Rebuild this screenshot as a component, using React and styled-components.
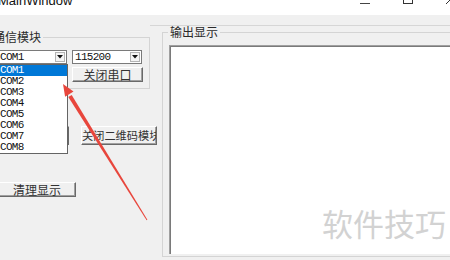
import React from 'react'
import styled, { createGlobalStyle } from 'styled-components'

const GlobalStyle = createGlobalStyle`
  html, body {
    margin: 0;
    padding: 0;
    background: #f0f0f0;
    overflow: hidden;
  }
`

const Screen = styled.div`
  position: relative;
  width: 450px;
  height: 260px;
  overflow: hidden;
  background: #f0f0f0;
  font-family: "Noto Sans CJK SC", "Liberation Sans", sans-serif;
  font-size: 12px;
  color: #1e1e1e;
`

const TitleBar = styled.header`
  height: 15px;
  background: #fff;
  display: flex;
  align-items: flex-start;
  overflow: hidden;
`

const Title = styled.span`
  font-family: "Liberation Sans", sans-serif;
  font-size: 13px;
  line-height: 13px;
  margin: -6px 0 0 -2px;
  color: #111;
`

const Controls = styled.div`
  margin-left: auto;
  margin-top: -6px;
  margin-right: -6px;
  display: flex;
  gap: 33px;
  svg { display: block; }
`

const Body = styled.div`
  display: flex;
  align-items: flex-start;
`

const LeftPane = styled.div`
  margin-left: -14px;
  width: 164px;
  flex-shrink: 0;
  display: flex;
  flex-direction: column;
  align-items: flex-start;
`

const GroupBox = styled.fieldset`
  box-sizing: border-box;
  margin: ${p => p.$top || 0}px ${p => p.$right || 0}px 0 0;
  padding: 0;
  width: ${p => (p.$w ? p.$w + 'px' : 'auto')};
  border: 1px solid #d4d4d4;
  min-width: 0;
`

const Legend = styled.legend`
  margin-left: ${p => p.$offset}px;
  padding: 0 2px;
  font-size: 12px;
  line-height: 12px;
  color: #2a2a2a;
`

const GroupContent = styled.div`
  padding: ${p => p.$pad};
`

const ComboRow = styled.div`
  display: flex;
  gap: 5px;
`

const Combo = styled.div`
  position: relative;
  box-sizing: border-box;
  width: 70px;
  height: 14px;
  border: 1px solid #7a7a7a;
  background: #fff;
  display: flex;
  align-items: center;
`

const ComboValue = styled.span`
  padding-left: 2px;
  font-family: "Liberation Mono", monospace;
  font-size: 11px;
  letter-spacing: -0.7px;
  line-height: 12px;
  color: #111;
`

const ArrowBox = styled.span`
  margin-left: auto;
  margin-right: 1px;
  box-sizing: border-box;
  width: 10px;
  height: 10px;
  border: 1px solid #b4b4b4;
  background: #f4f4f4;
  display: flex;
  align-items: center;
  justify-content: center;
`

const ListBox = styled.ul`
  position: absolute;
  top: 13px;
  left: 0;
  z-index: 2;
  box-sizing: border-box;
  width: 70px;
  margin: 0;
  padding: 0;
  list-style: none;
  background: #fff;
  border: 1px solid #646464;
`

const ListItem = styled.li`
  height: 11px;
  line-height: 11px;
  padding-left: 1px;
  font-family: "Liberation Mono", monospace;
  font-size: 11px;
  letter-spacing: -0.7px;
  background: ${p => (p.$selected ? '#0078d7' : 'transparent')};
  color: ${p => (p.$selected ? '#fff' : '#111')};
`

const Button = styled.div`
  box-sizing: border-box;
  width: ${p => p.$w}px;
  height: ${p => p.$h}px;
  line-height: ${p => p.$h - 2}px;
  background: #f0f0f0;
  border-style: solid;
  border-width: 1px;
  border-color: #fff #696969 #696969 #fff;
  box-shadow: inset -1px -1px 0 #a0a0a0;
  font-size: ${p => p.$fs || 12}px;
  color: #333;
  text-align: center;
  white-space: nowrap;
  overflow: hidden;
`

const ButtonRow = styled.div`
  display: flex;
  gap: ${p => p.$gap || 0}px;
  margin: ${p => p.$m};
`

const RightPane = styled.div`
  flex: 1;
  min-width: 0;
  margin-top: 10px;
  padding-left: 12px;
  border-top: 1px solid #d6d6d6;
`

const OutputBox = styled.div`
  height: 208px;
  background: #fff;
  border-top: 1px solid #a0a0a0;
  border-left: 1px solid #a0a0a0;
  box-shadow: inset 1px 1px 0 #7a7a7a;
`

const Watermark = styled.div`
  position: absolute;
  left: 322px;
  top: 207px;
  font-family: "Noto Sans CJK SC", sans-serif;
  font-size: 31px;
  line-height: 31px;
  color: #d2d2d2;
  z-index: 2;
`

const ArrowLayer = styled.svg`
  position: absolute;
  left: 0;
  top: 0;
  z-index: 3;
  pointer-events: none;
`

const ports = ['COM1', 'COM2', 'COM3', 'COM4', 'COM5', 'COM6', 'COM7', 'COM8']

function DownArrow() {
  return (
    <svg width="6" height="4" viewBox="0 0 6 4">
      <path d="M0 0 H6 L3 3.5 Z" fill="#111" />
    </svg>
  )
}

export default function App() {
  return (
    <>
      <GlobalStyle />
      <Screen>
        <TitleBar>
          <Title>MainWindow</Title>
          <Controls>
            <svg width="10" height="10" viewBox="0 0 10 10">
              <line x1="0" y1="9.5" x2="10" y2="9.5" stroke="#444" />
            </svg>
            <svg width="10" height="10" viewBox="0 0 10 10">
              <rect x="0.5" y="0.5" width="9" height="9" fill="none" stroke="#333" />
            </svg>
            <svg width="10" height="10" viewBox="0 0 10 10">
              <path d="M0 0 L10 10 M10 0 L0 10" stroke="#333" />
            </svg>
          </Controls>
        </TitleBar>

        <Body>
          <LeftPane>
            <GroupBox $top={16} $w={164}>
              <Legend $offset={4}>通信模块</Legend>
              <GroupContent $pad="7px 0 6px 10px">
                <ComboRow>
                  <Combo>
                    <ComboValue>COM1</ComboValue>
                    <ArrowBox><DownArrow /></ArrowBox>
                    <ListBox>
                      {ports.map((p, i) => (
                        <ListItem key={p} $selected={i === 0}>{p}</ListItem>
                      ))}
                    </ListBox>
                  </Combo>
                  <Combo>
                    <ComboValue>115200</ComboValue>
                    <ArrowBox><DownArrow /></ArrowBox>
                  </Combo>
                </ComboRow>
                <ButtonRow $m="3px 0 0 75px">
                  <Button $w={71} $h={15}>关闭串口</Button>
                </ButtonRow>
              </GroupContent>
            </GroupBox>

            <ButtonRow $m="37px 0 0 11px" $gap={12}>
              <Button $w={72} $h={19} />
              <Button $w={76} $h={19} $fs={11.2}>关闭二维码模块</Button>
            </ButtonRow>

            <ButtonRow $m="37px 0 0 12px">
              <Button $w={78} $h={15}>清理显示</Button>
            </ButtonRow>
          </LeftPane>

          <RightPane>
            <GroupBox $right={-30}>
              <Legend $offset={5}>输出显示</Legend>
              <GroupContent $pad="7px 0 2px 6px">
                <OutputBox />
              </GroupContent>
            </GroupBox>
          </RightPane>
        </Body>

        <Watermark>软件技巧</Watermark>

        <ArrowLayer width="450" height="260" viewBox="0 0 450 260">
          <polygon points="71.7,94.9 68.3,97.1 146.6,220.3 147.4,219.7" fill="#e8463c" />
          <polygon points="63,84 73.5,91.6 65.1,96.8" fill="#e8463c" />
        </ArrowLayer>
      </Screen>
    </>
  )
}
